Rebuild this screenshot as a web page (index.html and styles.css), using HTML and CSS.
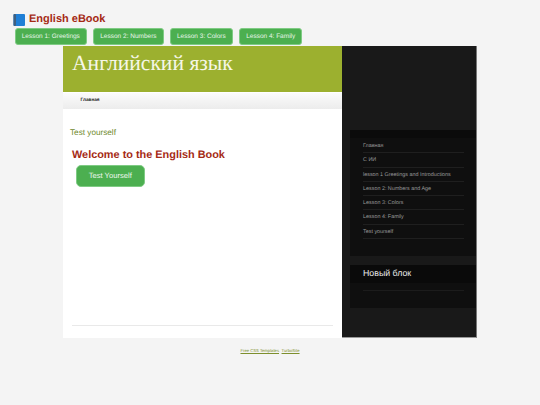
FILE: index.html
```html
<!DOCTYPE html>
<html lang="ru">
<head>
<meta charset="utf-8">
<title>English eBook</title>
<link rel="stylesheet" href="styles.css">
</head>
<body>
<header class="top">
  <h1 class="brand">
    <svg class="book" viewBox="0 0 12 12" width="12" height="12" aria-hidden="true">
      <rect x="0.5" y="0" width="11.5" height="12" rx="1" fill="#1f7fd6"/>
      <rect x="0.5" y="0" width="2.5" height="12" rx="1" fill="#3f5f7f"/>
    </svg>
    English eBook
  </h1>
  <nav class="lessons">
    <a class="lesson" href="#">Lesson 1: Greetings</a>
    <a class="lesson" href="#">Lesson 2: Numbers</a>
    <a class="lesson" href="#">Lesson 3: Colors</a>
    <a class="lesson" href="#">Lesson 4: Family</a>
  </nav>
</header>
<div class="wrapper">
  <main class="main">
    <div class="banner"><div class="site-title">Английский язык</div></div>
    <div class="menu"><a class="menu-link" href="#">Главная</a></div>
    <div class="content">
      <div class="page-title">Test yourself</div>
      <h2 class="welcome">Welcome to the English Book</h2>
      <a class="cta" href="#">Test Yourself</a>
      <div class="rule"></div>
    </div>
  </main>
  <aside class="sidebar">
    <div class="block nav-block">
      <ul class="side-list">
        <li>Главная</li>
        <li>С ИИ</li>
        <li>lesson 1 Greetings and Introductions</li>
        <li>Lesson 2: Numbers and Age</li>
        <li>Lesson 3: Colors</li>
        <li>Lesson 4: Family</li>
        <li>Test yourself</li>
      </ul>
    </div>
    <div class="block new-block">
      <div class="block-title">Новый блок</div>
      <div class="block-body"><div class="block-line"></div></div>
    </div>
  </aside>
</div>
<footer class="foot">
  <a href="#">Free CSS Templates</a>
  <a href="#">TurboSite</a>
</footer>
</body>
</html>
```

FILE: styles.css
```css
* { box-sizing: border-box; }
html, body { margin: 0; padding: 0; }
body {
  width: 540px;
  height: 405px;
  overflow: hidden;
  background: #f4f4f4;
  font-family: "Liberation Sans", Arial, sans-serif;
  text-rendering: geometricPrecision;
}
.top { padding: 13px 0 0 13px; height: 46px; }
.brand {
  display: flex;
  align-items: center;
  gap: 4px;
  margin: 0;
  height: 13px;
  font-size: 11px;
  line-height: 13px;
  font-weight: 700;
  color: #a52a14;
}
.lessons { display: flex; gap: 6px; margin: 2px 0 0 1.5px; }
.lesson {
  display: block;
  height: 16.5px;
  padding: 0 6.2px;
  background: #4caf50;
  border: 0.5px solid #7fcb84;
  border-radius: 3px;
  color: #e8f5e9;
  font-size: 6.5px;
  line-height: 15.5px;
  text-decoration: none;
}
.wrapper {
  display: flex;
  width: 414px;
  height: 292px;
  margin-left: 63px;
}
.main {
  display: flex;
  flex-direction: column;
  width: 279px;
  background: #fff;
}
.banner { height: 46px; padding: 4px 0 0 9px; background: #9cb02f; }
.site-title {
  font-family: "Liberation Serif", "Times New Roman", serif;
  font-size: 21.6px;
  line-height: 26px;
  color: #f6f7e8;
}
.menu {
  height: 16px;
  margin-top: 1px;
  padding-left: 17.5px;
  background: linear-gradient(#fbfbfb, #ececec);
}
.menu-link {
  display: block;
  color: #222;
  font-size: 4.7px;
  font-weight: 700;
  line-height: 13px;
  text-decoration: none;
}
.content { display: flex; flex-direction: column; flex: 1; padding: 19px 0 0 7px; }
.page-title { height: 10px; color: #6f8a2c; font-size: 8.2px; line-height: 10px; }
.welcome {
  margin: 10px 0 0 2px;
  height: 14px;
  color: #a52a14;
  font-size: 10.9px;
  line-height: 14px;
  font-weight: 700;
}
.cta {
  display: block;
  width: 68.5px;
  height: 21.5px;
  margin: 3px 0 0 6px;
  background: #4caf50;
  border: 0.5px solid #7fcb84;
  border-radius: 5px;
  color: #eef7ee;
  font-size: 7.6px;
  line-height: 19.5px;
  text-align: center;
  text-decoration: none;
}
.rule {
  width: 261px;
  height: 1.5px;
  margin: 138px 0 0 2px;
  background: #e9e9e9;
}
.sidebar {
  display: flex;
  flex-direction: column;
  width: 135px;
  padding: 84px 0 0 8px;
  background: #191919;
  border-right: 1px solid #777;
  border-bottom: 1px solid #999;
}
.block { background: #0f0f0f; }
.nav-block { height: 126px; padding-top: 9px; background: linear-gradient(#0b0b0b 8px, #0f0f0f 8px); }
.side-list { margin: 0; padding: 0 0 0 13px; width: 114px; list-style: none; }
.side-list li {
  height: 14.3px;
  color: #9a9a9a;
  font-size: 5.4px;
  line-height: 14.3px;
  border-bottom: 0.5px solid #1f1f1f;
  white-space: nowrap;
}
.new-block { margin-top: 9px; height: 43px; }
.block-title {
  height: 17.5px;
  padding-left: 13px;
  background: #0a0a0a;
  color: #e8e8e8;
  font-size: 8.8px;
  line-height: 17.5px;
}
.block-body { padding: 7.5px 0 0 13px; }
.block-line { width: 101px; height: 0.5px; background: #1c1c1c; }
.foot {
  display: flex;
  justify-content: center;
  gap: 2.5px;
  margin-top: 10px;
  font-size: 4.2px;
  line-height: 6px;
}
.foot a { color: #7d8f2c; text-decoration: underline; }
```
